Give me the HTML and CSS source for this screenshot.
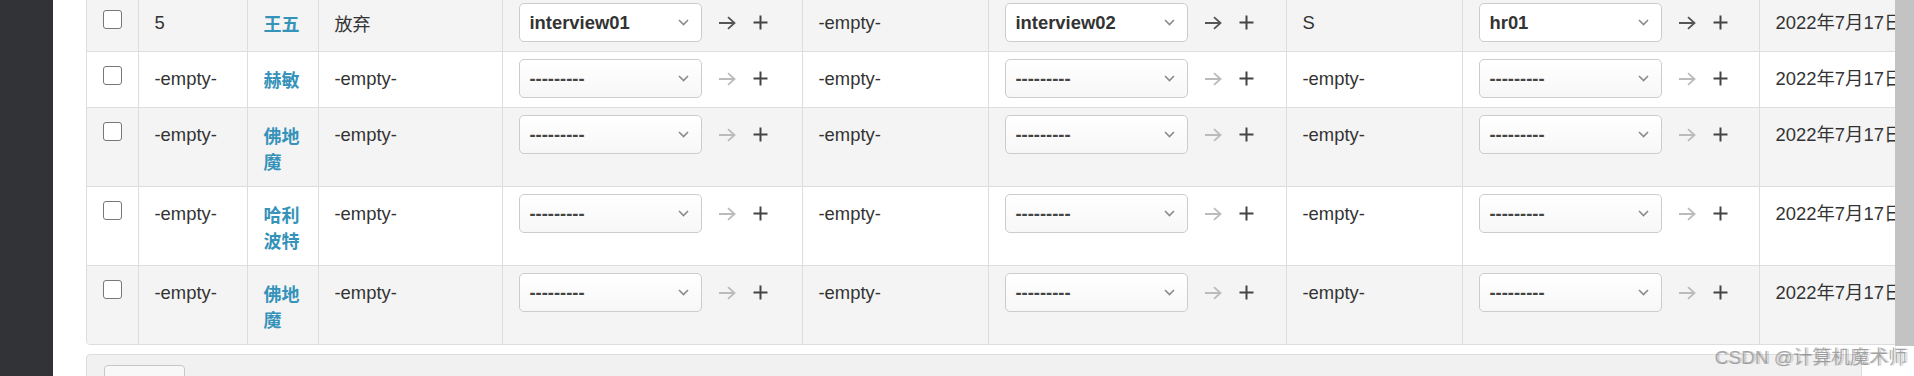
FILE: index.html
```html
<!DOCTYPE html>
<html lang="zh">
<head>
<meta charset="utf-8">
<title>Interview list</title>
<link rel="stylesheet" href="styles.css">
</head>
<body>
<div class="sidebar"></div>
<div class="main">
  <div class="results">
    <table class="grid">
      <colgroup>
        <col class="w-cb"><col class="w-num"><col class="w-name"><col class="w-status">
        <col class="w-fk"><col class="w-txt"><col class="w-fk2"><col class="w-grade">
        <col class="w-fk3"><col class="w-date">
      </colgroup>
      <tbody>
        <tr class="odd">
          <td><span class="cb"></span></td>
          <td>5</td>
          <td class="name"><a href="#">王五</a></td>
          <td class="cjk">放弃</td>
          <td class="sel"><div class="fk"><div class="select"><span>interview01</span><svg class="chev" width="11" height="7" viewBox="0 0 11 7"><path d="M1 1L5.5 5.5L10 1"/></svg></div><svg class="arrow on" width="18" height="14" viewBox="0 0 18 14"><path d="M1 7H16.5M10 1.2L16.5 7L10 12.8"/></svg><svg class="plus" width="15" height="15" viewBox="0 0 15 15"><path d="M7.5 0.5V14.5M0.5 7.5H14.5"/></svg></div></td>
          <td>-empty-</td>
          <td class="sel"><div class="fk"><div class="select"><span>interview02</span><svg class="chev" width="11" height="7" viewBox="0 0 11 7"><path d="M1 1L5.5 5.5L10 1"/></svg></div><svg class="arrow on" width="18" height="14" viewBox="0 0 18 14"><path d="M1 7H16.5M10 1.2L16.5 7L10 12.8"/></svg><svg class="plus" width="15" height="15" viewBox="0 0 15 15"><path d="M7.5 0.5V14.5M0.5 7.5H14.5"/></svg></div></td>
          <td>S</td>
          <td class="sel"><div class="fk"><div class="select"><span>hr01</span><svg class="chev" width="11" height="7" viewBox="0 0 11 7"><path d="M1 1L5.5 5.5L10 1"/></svg></div><svg class="arrow on" width="18" height="14" viewBox="0 0 18 14"><path d="M1 7H16.5M10 1.2L16.5 7L10 12.8"/></svg><svg class="plus" width="15" height="15" viewBox="0 0 15 15"><path d="M7.5 0.5V14.5M0.5 7.5H14.5"/></svg></div></td>
          <td class="date">2022年7月17日</td>
        </tr>
        <tr>
          <td><span class="cb"></span></td>
          <td>-empty-</td>
          <td class="name"><a href="#">赫敏</a></td>
          <td>-empty-</td>
          <td class="sel"><div class="fk"><div class="select blank"><span>---------</span><svg class="chev" width="11" height="7" viewBox="0 0 11 7"><path d="M1 1L5.5 5.5L10 1"/></svg></div><svg class="arrow" width="18" height="14" viewBox="0 0 18 14"><path d="M1 7H16.5M10 1.2L16.5 7L10 12.8"/></svg><svg class="plus" width="15" height="15" viewBox="0 0 15 15"><path d="M7.5 0.5V14.5M0.5 7.5H14.5"/></svg></div></td>
          <td>-empty-</td>
          <td class="sel"><div class="fk"><div class="select blank"><span>---------</span><svg class="chev" width="11" height="7" viewBox="0 0 11 7"><path d="M1 1L5.5 5.5L10 1"/></svg></div><svg class="arrow" width="18" height="14" viewBox="0 0 18 14"><path d="M1 7H16.5M10 1.2L16.5 7L10 12.8"/></svg><svg class="plus" width="15" height="15" viewBox="0 0 15 15"><path d="M7.5 0.5V14.5M0.5 7.5H14.5"/></svg></div></td>
          <td>-empty-</td>
          <td class="sel"><div class="fk"><div class="select blank"><span>---------</span><svg class="chev" width="11" height="7" viewBox="0 0 11 7"><path d="M1 1L5.5 5.5L10 1"/></svg></div><svg class="arrow" width="18" height="14" viewBox="0 0 18 14"><path d="M1 7H16.5M10 1.2L16.5 7L10 12.8"/></svg><svg class="plus" width="15" height="15" viewBox="0 0 15 15"><path d="M7.5 0.5V14.5M0.5 7.5H14.5"/></svg></div></td>
          <td class="date">2022年7月17日</td>
        </tr>
        <tr class="odd">
          <td><span class="cb"></span></td>
          <td>-empty-</td>
          <td class="name"><a href="#">佛地魔</a></td>
          <td>-empty-</td>
          <td class="sel"><div class="fk"><div class="select blank"><span>---------</span><svg class="chev" width="11" height="7" viewBox="0 0 11 7"><path d="M1 1L5.5 5.5L10 1"/></svg></div><svg class="arrow" width="18" height="14" viewBox="0 0 18 14"><path d="M1 7H16.5M10 1.2L16.5 7L10 12.8"/></svg><svg class="plus" width="15" height="15" viewBox="0 0 15 15"><path d="M7.5 0.5V14.5M0.5 7.5H14.5"/></svg></div></td>
          <td>-empty-</td>
          <td class="sel"><div class="fk"><div class="select blank"><span>---------</span><svg class="chev" width="11" height="7" viewBox="0 0 11 7"><path d="M1 1L5.5 5.5L10 1"/></svg></div><svg class="arrow" width="18" height="14" viewBox="0 0 18 14"><path d="M1 7H16.5M10 1.2L16.5 7L10 12.8"/></svg><svg class="plus" width="15" height="15" viewBox="0 0 15 15"><path d="M7.5 0.5V14.5M0.5 7.5H14.5"/></svg></div></td>
          <td>-empty-</td>
          <td class="sel"><div class="fk"><div class="select blank"><span>---------</span><svg class="chev" width="11" height="7" viewBox="0 0 11 7"><path d="M1 1L5.5 5.5L10 1"/></svg></div><svg class="arrow" width="18" height="14" viewBox="0 0 18 14"><path d="M1 7H16.5M10 1.2L16.5 7L10 12.8"/></svg><svg class="plus" width="15" height="15" viewBox="0 0 15 15"><path d="M7.5 0.5V14.5M0.5 7.5H14.5"/></svg></div></td>
          <td class="date">2022年7月17日</td>
        </tr>
        <tr>
          <td><span class="cb"></span></td>
          <td>-empty-</td>
          <td class="name"><a href="#">哈利波特</a></td>
          <td>-empty-</td>
          <td class="sel"><div class="fk"><div class="select blank"><span>---------</span><svg class="chev" width="11" height="7" viewBox="0 0 11 7"><path d="M1 1L5.5 5.5L10 1"/></svg></div><svg class="arrow" width="18" height="14" viewBox="0 0 18 14"><path d="M1 7H16.5M10 1.2L16.5 7L10 12.8"/></svg><svg class="plus" width="15" height="15" viewBox="0 0 15 15"><path d="M7.5 0.5V14.5M0.5 7.5H14.5"/></svg></div></td>
          <td>-empty-</td>
          <td class="sel"><div class="fk"><div class="select blank"><span>---------</span><svg class="chev" width="11" height="7" viewBox="0 0 11 7"><path d="M1 1L5.5 5.5L10 1"/></svg></div><svg class="arrow" width="18" height="14" viewBox="0 0 18 14"><path d="M1 7H16.5M10 1.2L16.5 7L10 12.8"/></svg><svg class="plus" width="15" height="15" viewBox="0 0 15 15"><path d="M7.5 0.5V14.5M0.5 7.5H14.5"/></svg></div></td>
          <td>-empty-</td>
          <td class="sel"><div class="fk"><div class="select blank"><span>---------</span><svg class="chev" width="11" height="7" viewBox="0 0 11 7"><path d="M1 1L5.5 5.5L10 1"/></svg></div><svg class="arrow" width="18" height="14" viewBox="0 0 18 14"><path d="M1 7H16.5M10 1.2L16.5 7L10 12.8"/></svg><svg class="plus" width="15" height="15" viewBox="0 0 15 15"><path d="M7.5 0.5V14.5M0.5 7.5H14.5"/></svg></div></td>
          <td class="date">2022年7月17日</td>
        </tr>
        <tr class="odd last">
          <td><span class="cb"></span></td>
          <td>-empty-</td>
          <td class="name"><a href="#">佛地魔</a></td>
          <td>-empty-</td>
          <td class="sel"><div class="fk"><div class="select blank"><span>---------</span><svg class="chev" width="11" height="7" viewBox="0 0 11 7"><path d="M1 1L5.5 5.5L10 1"/></svg></div><svg class="arrow" width="18" height="14" viewBox="0 0 18 14"><path d="M1 7H16.5M10 1.2L16.5 7L10 12.8"/></svg><svg class="plus" width="15" height="15" viewBox="0 0 15 15"><path d="M7.5 0.5V14.5M0.5 7.5H14.5"/></svg></div></td>
          <td>-empty-</td>
          <td class="sel"><div class="fk"><div class="select blank"><span>---------</span><svg class="chev" width="11" height="7" viewBox="0 0 11 7"><path d="M1 1L5.5 5.5L10 1"/></svg></div><svg class="arrow" width="18" height="14" viewBox="0 0 18 14"><path d="M1 7H16.5M10 1.2L16.5 7L10 12.8"/></svg><svg class="plus" width="15" height="15" viewBox="0 0 15 15"><path d="M7.5 0.5V14.5M0.5 7.5H14.5"/></svg></div></td>
          <td>-empty-</td>
          <td class="sel"><div class="fk"><div class="select blank"><span>---------</span><svg class="chev" width="11" height="7" viewBox="0 0 11 7"><path d="M1 1L5.5 5.5L10 1"/></svg></div><svg class="arrow" width="18" height="14" viewBox="0 0 18 14"><path d="M1 7H16.5M10 1.2L16.5 7L10 12.8"/></svg><svg class="plus" width="15" height="15" viewBox="0 0 15 15"><path d="M7.5 0.5V14.5M0.5 7.5H14.5"/></svg></div></td>
          <td class="date">2022年7月17日</td>
        </tr>
      </tbody>
    </table>
  </div>
  <div class="actions">
    <div class="btn"></div>
  </div>
</div>
<div class="scrollbar"><div class="thumb"></div></div>
<div class="watermark">CSDN @计算机魔术师</div>
</body>
</html>
```

FILE: styles.css
```css
html, body {
  margin: 0;
  padding: 0;
}
body {
  display: flex;
  height: 376px;
  overflow: hidden;
  position: relative;
  background: #fff;
  font-family: "Liberation Sans", Arial, "Noto Sans CJK SC", sans-serif;
  font-size: 18.4px;
  color: #333;
}
.sidebar {
  width: 53px;
  flex: none;
  background: #323337;
}
.main {
  flex: 1;
  min-width: 0;
  overflow: hidden;
  padding-left: 33px;
}
.scrollbar {
  width: 19px;
  flex: none;
  background: #fff;
}
.thumb {
  height: 346px;
  background: #c3c3c3;
}
.results {
  width: max-content;
  margin-top: -5px;
  border: 1px solid #ddd;
  border-radius: 4px;
  overflow: hidden;
}
.grid {
  border-collapse: collapse;
  table-layout: fixed;
  width: 1872px;
}
.w-cb { width: 51px; }
.w-num { width: 109px; }
.w-name { width: 71px; }
.w-status { width: 184px; }
.w-fk { width: 300px; }
.w-txt { width: 186px; }
.w-fk2 { width: 298px; }
.w-grade { width: 176px; }
.w-fk3 { width: 297px; }
.w-date { width: 200px; }

.grid td {
  padding: 14px 16px 12px 16px;
  line-height: 26px;
  height: 26px;
  vertical-align: top;
  border-left: 1px solid #ddd;
  border-bottom: 1px solid #ddd;
}
.grid td:first-child {
  border-left: none;
}
.grid tr.last td {
  border-bottom: none;
}
.grid tr.odd {
  background: #f4f4f4;
}
.grid td.sel {
  padding: 7px 16px 9px 16px;
  white-space: nowrap;
}
.grid td.date {
  white-space: nowrap;
  overflow: hidden;
}
.grid td.name,
.grid td.cjk {
  font-family: "Noto Sans CJK SC", sans-serif;
  font-size: 18px;
  line-height: 26px;
}
.name a {
  display: block;
  line-height: 26px;
  color: #3592b9;
  font-weight: bold;
  text-decoration: none;
}
.cb {
  display: block;
  width: 19px;
  height: 19px;
  box-sizing: border-box;
  border: 1.5px solid #777;
  border-radius: 3px;
  background: #fff;
}
.fk {
  display: flex;
  align-items: center;
}
.select {
  width: 183px;
  height: 39px;
  box-sizing: border-box;
  border: 1px solid #ccc;
  border-radius: 5px;
  background: #fff;
  padding: 0 12px 0 10px;
  display: flex;
  align-items: center;
  justify-content: space-between;
  font-weight: bold;
  color: #333;
}
.select.blank {
  background: linear-gradient(#fff, #f7f7f7);
  color: #444;
}
.chev path {
  fill: none;
  stroke: #8a8a8a;
  stroke-width: 1.6;
}
.arrow {
  margin-left: 16px;
  flex: none;
}
.arrow path {
  fill: none;
  stroke: #bbb;
  stroke-width: 1.8;
}
.arrow.on path {
  stroke: #555;
}
.plus {
  margin-left: 17px;
  flex: none;
}
.plus path {
  fill: none;
  stroke: #444;
  stroke-width: 2;
}
.actions {
  margin-top: 9px;
  margin-right: 33px;
  background: #f1f1f1;
  border: 1px solid #ddd;
  border-radius: 4px;
  padding: 10px 17px;
  height: 60px;
}
.btn {
  width: 81px;
  height: 36px;
  box-sizing: border-box;
  border: 1px solid #c8c8c8;
  border-radius: 4px;
  background: #f8f8f8;
}
.watermark {
  position: absolute;
  right: 7px;
  top: 346px;
  font-size: 19px;
  line-height: 24px;
  color: rgba(110, 110, 110, 0.55);
  text-shadow: 2px 0 0 rgba(150, 150, 150, 0.35);
  white-space: nowrap;
}
```
